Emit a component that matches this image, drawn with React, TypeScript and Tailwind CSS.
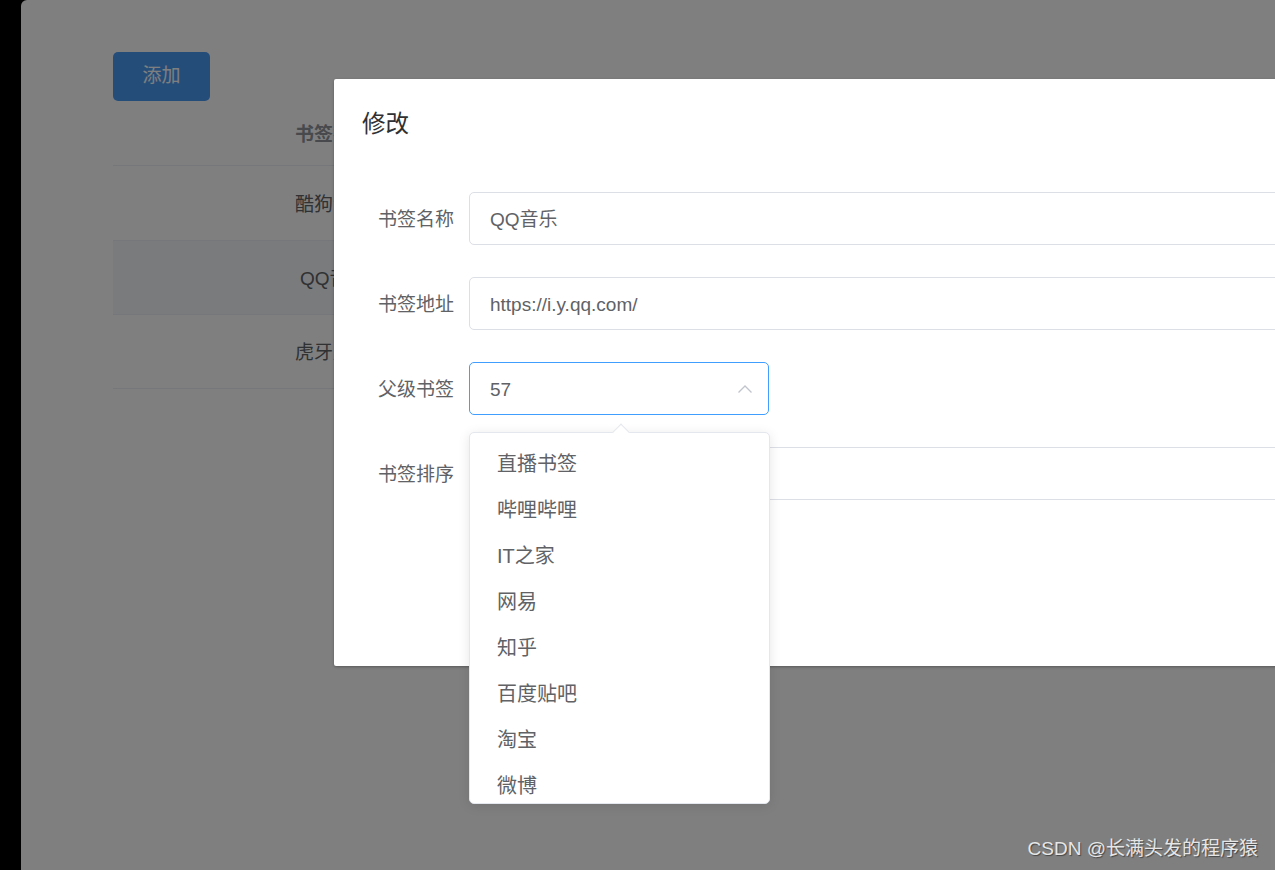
const font = "font-['Liberation_Sans','Noto_Sans_CJK_SC',sans-serif]";

const tableRows = [
  { name: "酷狗音乐", hover: false, indent: false, height: "h-[75px]" },
  { name: "QQ音乐", hover: true, indent: true, height: "h-[74px]" },
  { name: "虎牙直播", hover: false, indent: false, height: "h-[74px]" },
];

const formRows = [
  { label: "书签名称", value: "QQ音乐" },
  { label: "书签地址", value: "https://i.y.qq.com/" },
];

const options = ["直播书签", "哔哩哔哩", "IT之家", "网易", "知乎", "百度贴吧", "淘宝", "微博"];

function ChevronUp() {
  return (
    <svg width="16" height="10" viewBox="0 0 16 10" fill="none" className="mr-[15px]">
      <polyline points="1.5,8.5 8,2 14.5,8.5" stroke="#c0c4cc" strokeWidth="1.3" />
    </svg>
  );
}

export default function App() {
  return (
    <div className={`relative flex h-[870px] w-[1275px] overflow-hidden bg-black ${font}`}>
      <div className="w-[21px] shrink-0 bg-black" />

      {/* page underneath the mask */}
      <div className="relative flex-1 rounded-tl-[6px] bg-white">
        <div className="pl-[92px] pt-[52px]">
          <button
            type="button"
            className="flex h-[49px] w-[97px] items-center justify-center rounded-[5px] bg-[#4b9bf5] text-[19px] text-white"
          >
            添加
          </button>

          <div className="mt-[2px] w-[1100px]">
            <div className="flex h-[63px] items-center border-b border-[#ebeef5] pl-[182px] pt-[2px]">
              <span className="text-[19px] font-bold text-[#909399]">书签名称</span>
            </div>
            {tableRows.map((row) => (
              <div
                key={row.name}
                className={`flex items-center border-b border-[#ebeef5] pl-[182px] pt-[4px] ${row.height} ${row.hover ? "bg-[#f5f7fa]" : ""}`}
              >
                <span className={`text-[19px] text-[#606266] ${row.indent ? "pl-[5px]" : ""}`}>{row.name}</span>
              </div>
            ))}
          </div>
        </div>

        <div className="absolute inset-0 bg-black/50" />
      </div>

      {/* dialog */}
      <div className="absolute left-[334px] top-[79px] h-[587px] w-[1100px] rounded-[2px] bg-white shadow-[0_1px_3px_rgba(0,0,0,0.3)]">
        <div className="pl-[28px] pt-[30px] text-[23.5px] leading-[30px] text-[#303133]">修改</div>

        <div className="mt-[53px] flex flex-col gap-[32px] pl-[28px]">
          {formRows.map((row) => (
            <div key={row.label} className="flex items-center">
              <label className="w-[107px] pr-[15px] pt-[3px] text-right text-[19px] text-[#606266]">{row.label}</label>
              <div className="flex h-[53px] flex-1 items-center rounded-[5px] border border-[#dcdfe6] pl-[20px] pt-[3px] text-[19px] text-[#606266]">
                {row.value}
              </div>
            </div>
          ))}

          <div className="flex items-center">
            <label className="w-[107px] pr-[15px] pt-[3px] text-right text-[19px] text-[#606266]">父级书签</label>
            <div className="flex h-[53px] w-[300px] items-center justify-between rounded-[5px] border border-[#409eff] pl-[20px] text-[19px] text-[#606266]">
              <span className="pt-[3px]">57</span>
              <ChevronUp />
            </div>
          </div>

          <div className="flex items-center">
            <label className="w-[107px] pr-[15px] pt-[3px] text-right text-[19px] text-[#606266]">书签排序</label>
            <div className="h-[53px] flex-1 rounded-[5px] border border-[#dcdfe6]" />
          </div>
        </div>
      </div>

      {/* select dropdown */}
      <div className="absolute left-[469px] top-[432px] h-[372px] w-[301px] rounded-[5px] border border-[#e4e7ed] bg-white shadow-[0_2px_12px_rgba(0,0,0,0.1)]">
        <div className="absolute left-[145px] top-[-7px] h-[12px] w-[12px] rotate-45 border-l border-t border-[#e4e7ed] bg-white" />
        <div className="relative h-full overflow-hidden rounded-[5px] pt-[8px]">
          {options.map((item) => (
            <div key={item} className="flex h-[46px] items-center pl-[27px] text-[20px] text-[#606266]">
              {item}
            </div>
          ))}
        </div>
      </div>

      <div className="absolute bottom-[7px] right-[17px] text-[19px] text-[#e6e6e6] [text-shadow:1px_1px_1px_rgba(0,0,0,0.45)]">
        CSDN @长满头发的程序猿
      </div>
    </div>
  );
}
